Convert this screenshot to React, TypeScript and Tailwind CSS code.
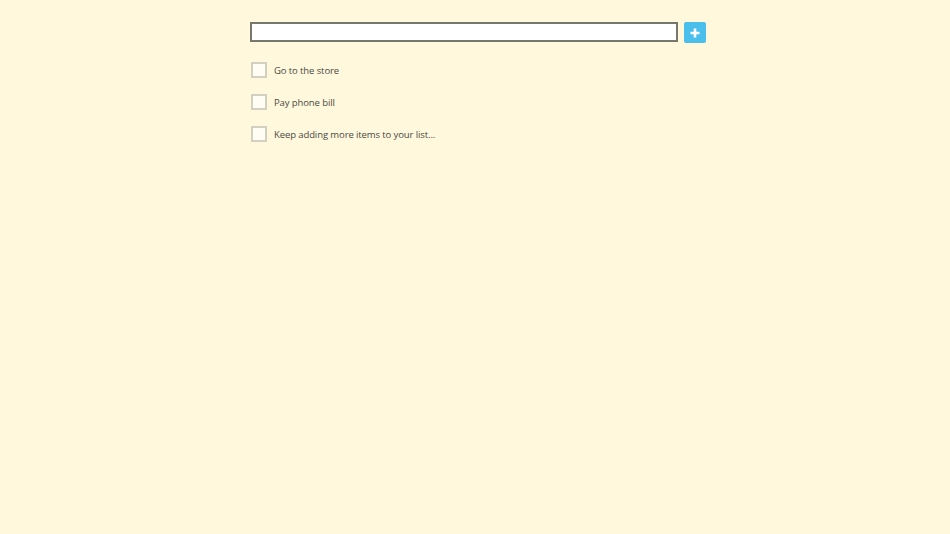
import { useState } from "react";

const items = ["Go to the store", "Pay phone bill", "Keep adding more items to your list..."];

export default function App() {
  const [text, setText] = useState("");
  const [done, setDone] = useState<boolean[]>(items.map(() => false));

  return (
    <div className="min-h-[534px] w-full bg-[#fff8dc] font-['Open_Sans',sans-serif]">
      <div className="mx-auto w-[462px] pl-[6px] pt-[22px]">
        <div className="flex items-start gap-[6px]">
          <input
            value={text}
            onChange={(e) => setText(e.target.value)}
            className="h-[20px] w-[428px] border-2 border-[#77776c] bg-white px-1 text-[11px] outline-none"
          />
          <button className="flex h-[21px] w-[22px] items-center justify-center rounded-[2px] bg-[#4bbfeb]">
            <svg width="10" height="10" viewBox="0 0 10 10">
              <path d="M5 0.5v9M0.5 5h9" stroke="white" strokeWidth="2.6" />
            </svg>
          </button>
        </div>
        <ul className="mt-[19px] flex flex-col gap-[16px]">
          {items.map((item, i) => (
            <li key={item} className="flex h-[16px] items-center gap-[7px] pl-px">
              <button
                onClick={() => setDone(done.map((d, j) => (j === i ? !d : d)))}
                className="h-[16px] w-[16px] border-2 border-[#d3d0c2] bg-[#fffdf4]"
              />
              <span className="pt-[2px] text-[9.5px] leading-none tracking-[-0.1px] text-[#4a4a44]">{item}</span>
            </li>
          ))}
        </ul>
      </div>
    </div>
  );
}
